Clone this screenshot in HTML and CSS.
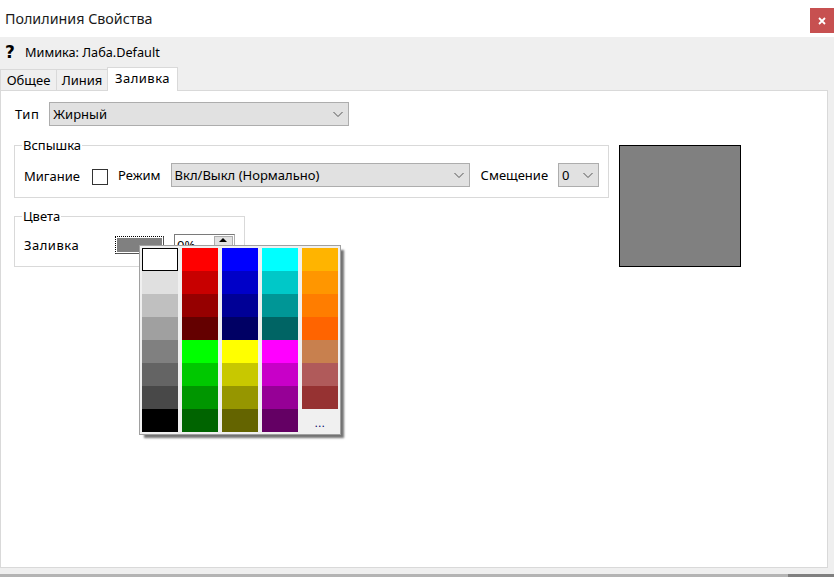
FILE: index.html
```html
<!DOCTYPE html>
<html lang="ru">
<head>
    <meta charset="UTF-8">
    <meta name="viewport" content="width=device-width, initial-scale=1.0">
    <title>Полилиния Свойства</title>
    <link rel="stylesheet" href="styles.css">
</head>
<body>

    <div class="window">
        <div class="titlebar">
            <span class="title">Полилиния Свойства</span>
            <button class="close" aria-label="Закрыть">
                <svg width="8" height="8" viewBox="0 0 8 8"><path d="M1 1L7 7M7 1L1 7" stroke="#fff" stroke-width="1.8"/></svg>
            </button>
        </div>

        <div class="client">
            <div class="infoline">
                <span class="help">?</span>
                <span class="info-text">Мимика: Лаба.Default</span>
            </div>

            <div class="tabs">
                <span class="tab tab-common">Общее</span>
                <span class="tab tab-line">Линия</span>
                <span class="tab tab-fill active">Заливка</span>
            </div>

            <div class="panel">
                <div class="left">
                    <div class="row type-row">
                        <label class="wide">Тип</label>
                        <div class="combo combo-type">
                            <span>Жирный</span>
                            <svg class="chevron" width="10" height="5" viewBox="0 0 10 5"><path d="M.5 0L5 4.5L9.5 0" fill="none" stroke="#555"/></svg>
                        </div>
                    </div>

                    <fieldset class="group group-flash">
                        <legend>Вспышка</legend>
                        <div class="row">
                            <label class="blink-label">Мигание</label>
                            <span class="check"></span>
                            <label class="mode-label">Режим</label>
                            <div class="combo combo-mode">
                                <span>Вкл/Выкл (Нормально)</span>
                                <svg class="chevron" width="10" height="5" viewBox="0 0 10 5"><path d="M.5 0L5 4.5L9.5 0" fill="none" stroke="#555"/></svg>
                            </div>
                            <label class="offset-label">Смещение</label>
                            <div class="combo combo-offset">
                                <span>0</span>
                                <svg class="chevron" width="10" height="5" viewBox="0 0 10 5"><path d="M.5 0L5 4.5L9.5 0" fill="none" stroke="#555"/></svg>
                            </div>
                        </div>
                    </fieldset>

                    <fieldset class="group group-colors">
                        <legend>Цвета</legend>
                        <div class="row">
                            <label class="fill-label">Заливка</label>
                            <span class="swatch"><span class="swatch-color"></span></span>
                            <div class="spin">
                                <span class="spin-value">0%</span>
                                <span class="spin-up"></span>
                            </div>
                        </div>
                    </fieldset>
                </div>

                <div class="preview"></div>

                <div class="palette">
                    <div class="col">
                        <span class="cell selected"></span>
                        <span class="cell c-e0"></span>
                        <span class="cell c-c0"></span>
                        <span class="cell c-a0"></span>
                        <span class="cell c-80"></span>
                        <span class="cell c-64"></span>
                        <span class="cell c-48"></span>
                        <span class="cell c-00"></span>
                    </div>
                    <div class="col">
                        <span class="cell red1"></span>
                        <span class="cell red2"></span>
                        <span class="cell red3"></span>
                        <span class="cell red4"></span>
                        <span class="cell green1"></span>
                        <span class="cell green2"></span>
                        <span class="cell green3"></span>
                        <span class="cell green4"></span>
                    </div>
                    <div class="col">
                        <span class="cell blue1"></span>
                        <span class="cell blue2"></span>
                        <span class="cell blue3"></span>
                        <span class="cell blue4"></span>
                        <span class="cell yellow1"></span>
                        <span class="cell yellow2"></span>
                        <span class="cell yellow3"></span>
                        <span class="cell yellow4"></span>
                    </div>
                    <div class="col">
                        <span class="cell cyan1"></span>
                        <span class="cell cyan2"></span>
                        <span class="cell cyan3"></span>
                        <span class="cell cyan4"></span>
                        <span class="cell magenta1"></span>
                        <span class="cell magenta2"></span>
                        <span class="cell magenta3"></span>
                        <span class="cell magenta4"></span>
                    </div>
                    <div class="col">
                        <span class="cell orange1"></span>
                        <span class="cell orange2"></span>
                        <span class="cell orange3"></span>
                        <span class="cell orange4"></span>
                        <span class="cell brown1"></span>
                        <span class="cell brown2"></span>
                        <span class="cell brown3"></span>
                        <span class="cell more">...</span>
                    </div>
                </div>
            </div>
        </div>

        <div class="bottom-strip"><span class="strip-end"></span></div>
    </div>

</body>
</html>
```

FILE: styles.css
```css
* {
    box-sizing: border-box;
}
html, body {
    height: 100%;
}
body {
    margin: 0;
    background: #efefef;
    color: #000;
    font-family: "Noto Sans", "Open Sans", sans-serif;
    font-size: 13px;
    overflow: hidden;
}
.window {
    display: flex;
    flex-direction: column;
    height: 577px;
}

/* title bar */
.titlebar {
    height: 37px;
    flex: none;
    background: #fff;
    display: flex;
    justify-content: space-between;
    padding: 8px 0 4px 5px;
}
.title {
    font-size: 14.3px;
    line-height: 22px;
    color: #1a1a1a;
}
.close {
    width: 24px;
    height: 25px;
    border: 0;
    padding: 0;
    background: #c75050;
    display: flex;
    align-items: center;
    justify-content: center;
}

.client {
    flex: 1;
    display: flex;
    flex-direction: column;
    padding: 0 6px 6px 0;
}
.infoline {
    height: 30px;
    flex: none;
    display: flex;
    align-items: center;
    padding-left: 5px;
}
.help {
    width: 20px;
    font-family: "DejaVu Sans", sans-serif;
    font-weight: bold;
    font-size: 17px;
}
.info-text {
    font-size: 12.7px;
}

/* tabs */
.tabs {
    height: 24px;
    flex: none;
    display: flex;
    align-items: flex-end;
    margin-bottom: -1px;
    position: relative;
    z-index: 1;
}
.tab {
    height: 21px;
    margin: 0 -1px 1px 0;
    line-height: 21px;
    text-align: center;
    background: #efefef;
    border: 1px solid #d9d9d9;
    border-bottom: 0;
}
.tab-common {
    width: 57px;
}
.tab-line {
    width: 52px;
}
.tab-fill {
    width: 71px;
}
.tab.active {
    height: 24px;
    margin-bottom: 0;
    background: #fff;
    line-height: 20px;
    letter-spacing: .5px;
}

.panel {
    flex: 1;
    background: #fff;
    border: 1px solid #d9d9d9;
    display: flex;
    align-items: flex-start;
    padding: 11px 0 0 13px;
    position: relative;
}
.left {
    width: 595px;
}
.row {
    display: flex;
    align-items: center;
}
.type-row {
    gap: 10px;
    margin-left: 1px;
}
.wide {
    letter-spacing: .5px;
}

/* combo boxes */
.combo {
    height: 24px;
    background: #e1e1e1;
    border: 1px solid #adadad;
    display: flex;
    align-items: center;
    justify-content: space-between;
    padding: 0 5px 0 3px;
}
.combo-type {
    width: 300px;
}
.combo-mode {
    width: 299px;
}
.combo-offset {
    width: 41px;
}

/* groups */
.group {
    margin: 0;
    padding: 9px 0 0 9px;
    border: 1px solid #d9d9d9;
    min-width: 0;
}
.group legend {
    margin-left: -2px;
    padding: 0 1px;
    line-height: 18px;
}
.group-flash {
    width: 595px;
    height: 62px;
    margin-top: 10px;
}
.group-colors {
    width: 231px;
    height: 60px;
    margin-top: 9px;
}
.blink-label {
    margin-top: 2px;
}
.check {
    width: 16px;
    height: 16px;
    margin: 4px 0 0 12px;
    border: 1px solid #333;
}
.mode-label {
    margin: 0 10px;
}
.offset-label {
    margin: 0 10px 0 11px;
}
.fill-label {
    width: 91px;
    letter-spacing: .5px;
}
.swatch {
    width: 49px;
    height: 18px;
    padding: 1px;
    border: 1px dotted #000;
    border-right-style: solid;
    border-bottom-style: solid;
    border-right-color: #555;
    border-bottom-color: #555;
}
.swatch-color {
    display: block;
    height: 100%;
    background: #808080;
}
.spin {
    width: 61px;
    height: 22px;
    margin-left: 10px;
    padding: 1px;
    border: 1px solid #7a7a7a;
    border-right-color: #adadad;
    display: flex;
    justify-content: space-between;
}
.spin-value {
    padding-left: 1px;
    line-height: 18px;
}
.spin-up {
    width: 19px;
    background: #e1e1e1;
    border: 1px solid #adadad;
    position: relative;
}
.spin-up::after {
    content: "";
    position: absolute;
    left: 4px;
    top: 1px;
    border: 4px solid transparent;
    border-top: 0;
    border-bottom: 4px solid #000;
}
.preview {
    width: 122px;
    height: 122px;
    margin: 43px 0 0 10px;
    background: #808080;
    border: 1px solid #000;
}

/* colour picker popup */
.palette {
    position: absolute;
    left: 138px;
    top: 154px;
    width: 202px;
    height: 190px;
    background: #f0f0f0;
    border: 1px solid #a0a0a0;
    box-shadow: 4px 4px 2px -1px rgba(0, 0, 0, .55);
    display: flex;
    gap: 4px;
    padding: 2px;
}
.col {
    width: 36px;
    display: flex;
    flex-direction: column;
}
.cell {
    height: 23px;
    flex: none;
}
.cell.selected { background: #fff; border: 1px solid #000; }
.c-e0 { background: #e0e0e0; }
.c-c0 { background: #c0c0c0; }
.c-a0 { background: #a0a0a0; }
.c-80 { background: #808080; }
.c-64 { background: #646464; }
.c-48 { background: #484848; }
.c-00 { background: #000; }
.red1 { background: #f00; }
.red2 { background: #c80000; }
.red3 { background: #960000; }
.red4 { background: #640000; }
.green1 { background: #0f0; }
.green2 { background: #00c800; }
.green3 { background: #009600; }
.green4 { background: #006400; }
.blue1 { background: #00f; }
.blue2 { background: #0000c8; }
.blue3 { background: #000096; }
.blue4 { background: #000064; }
.yellow1 { background: #ff0; }
.yellow2 { background: #c8c800; }
.yellow3 { background: #969600; }
.yellow4 { background: #646400; }
.cyan1 { background: #0ff; }
.cyan2 { background: #00c8c8; }
.cyan3 { background: #009696; }
.cyan4 { background: #006464; }
.magenta1 { background: #f0f; }
.magenta2 { background: #c800c8; }
.magenta3 { background: #960096; }
.magenta4 { background: #640064; }
.orange1 { background: #ffb400; }
.orange2 { background: #ff9600; }
.orange3 { background: #ff7d00; }
.orange4 { background: #ff6400; }
.brown1 { background: #c8804e; }
.brown2 { background: #b05a5a; }
.brown3 { background: #963232; }
.more {
    text-align: center;
    line-height: 27px;
    font-size: 11px;
    letter-spacing: .5px;
    color: #000064;
}

.bottom-strip {
    height: 3px;
    flex: none;
    background: #b4b4b4;
    display: flex;
    justify-content: flex-end;
}
.strip-end {
    width: 46px;
    background: #808080;
}
```
